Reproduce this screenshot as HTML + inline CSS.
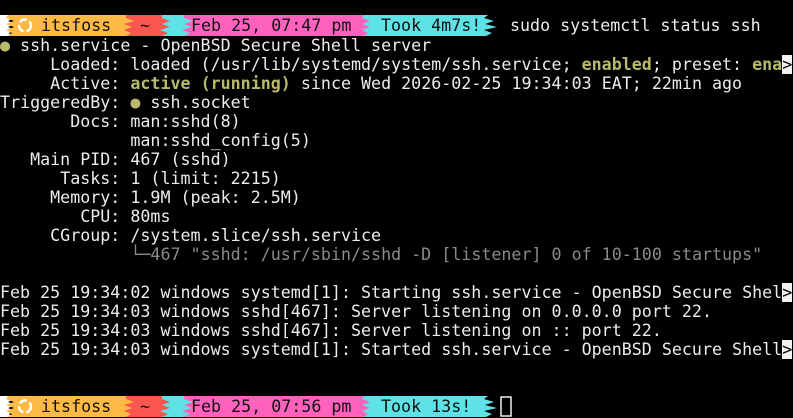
<!DOCTYPE html>
<html><head><meta charset="utf-8"><style>
html,body{margin:0;padding:0;background:#000;width:793px;height:418px;overflow:hidden}
.t{position:absolute;left:0;font-family:"DejaVu Sans Mono","Liberation Mono",monospace;font-size:16.66px;line-height:19px;color:#ececec;white-space:pre;margin:0}
.g{color:#b9b96c}
.b{font-weight:bold;color:#b9b96c}
.d{color:#8a8a8a}
.inv{background:#f2f2f2;color:#000}
.p{position:absolute;height:21px;font-family:"DejaVu Sans Mono",monospace;font-size:16.66px;line-height:21px;color:#111;white-space:pre}
</style></head><body>
<svg width="793" height="418" style="position:absolute;left:0;top:0">
<g id="bar">
<polygon fill="#fff" points="0,15 10,15 14,18 8,21 16,24 8,27 15,30 9,33 12,36 0,36"/>
<polygon fill="#fdb945" points="8,15 132,15 128,18 136,21 126,24 134,27 126,30 133,33 128,36 8,36 12,33 6,30 14,27 6,24 14,21 6,18"/>
<polygon fill="#f9564f" points="126,15 168,15 163,18 171,21 164,24 172,27 163,30 170,33 165,36 126,36 131,33 124,30 132,27 124,24 134,21 126,18"/>
<polygon fill="#5ee2e6" points="162,15 192,15 186,18 195,21 187,24 196,27 186,30 194,33 188,36 162,36 168,33 160,30 170,27 162,24 170,21 162,18"/>
<polygon fill="#ff62bd" points="184,15 370,15 366,18 374,21 365,24 373,27 364,30 372,33 367,36 184,36 190,33 182,30 192,27 184,24 193,21 184,18"/>
<polygon fill="#5ee2e6" points="364,15 488,15 484,18 494,21 485,24 497,27 484,30 492,33 486,36 364,36 368,33 362,30 370,27 362,24 370,21 362,18"/>
<circle cx="25" cy="25.5" r="6" fill="none" stroke="#fff" stroke-width="2.5" stroke-dasharray="8 3"/>
</g>
<use href="#bar" y="381"/>
<rect x="501" y="397" width="10" height="19" fill="none" stroke="#eee" stroke-width="1.5"/>
</svg>
<div class="p" style="left:41px;top:15px">itsfoss</div>
<div class="p" style="left:140px;top:15px">~</div>
<div class="p" style="left:191px;top:15px">Feb 25, 07:47 pm</div>
<div class="p" style="left:381px;top:15px">Took 4m7s!</div>
<div class="p" style="left:510px;top:15px;color:#ececec">sudo systemctl status ssh</div>
<div class="p" style="left:41px;top:396px">itsfoss</div>
<div class="p" style="left:140px;top:396px">~</div>
<div class="p" style="left:191px;top:396px">Feb 25, 07:56 pm</div>
<div class="p" style="left:381px;top:396px">Took 13s!</div>
<pre class="t" style="top:36px"><span class="g">●</span> ssh.service - OpenBSD Secure Shell server
     Loaded: loaded (/usr/lib/systemd/system/ssh.service; <span class="b">enabled</span>; preset: <span class="b">ena</span><span class="inv">&gt;</span>
     Active: <span class="b">active (running)</span> since Wed 2026-02-25 19:34:03 EAT; 22min ago
TriggeredBy: <span class="g">●</span> ssh.socket
       Docs: man:sshd(8)
             man:sshd_config(5)
   Main PID: 467 (sshd)
      Tasks: 1 (limit: 2215)
     Memory: 1.9M (peak: 2.5M)
        CPU: 80ms
     CGroup: /system.slice/ssh.service
             <span class="d">└─467 "sshd: /usr/sbin/sshd -D [listener] 0 of 10-100 startups"</span>

Feb 25 19:34:02 windows systemd[1]: Starting ssh.service - OpenBSD Secure Shel<span class="inv">&gt;</span>
Feb 25 19:34:03 windows sshd[467]: Server listening on 0.0.0.0 port 22.
Feb 25 19:34:03 windows sshd[467]: Server listening on :: port 22.
Feb 25 19:34:03 windows systemd[1]: Started ssh.service - OpenBSD Secure Shell<span class="inv">&gt;</span></pre>
</body></html>
